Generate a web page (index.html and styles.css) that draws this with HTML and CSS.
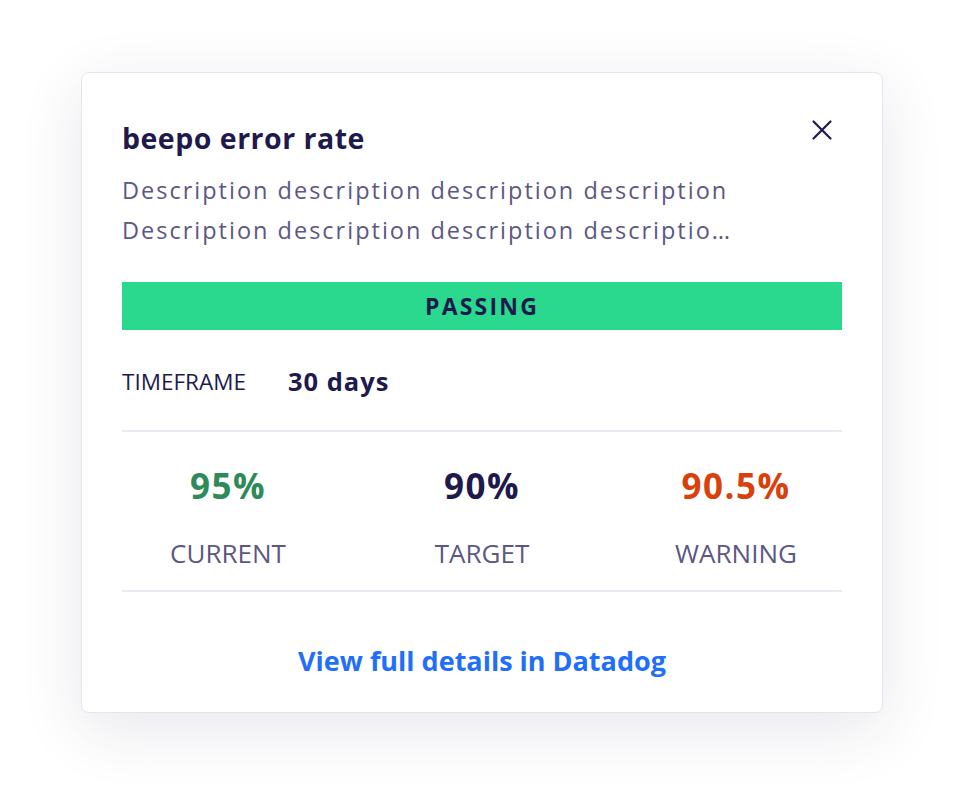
FILE: index.html
```html
<!DOCTYPE html>
<html lang="en">
<head>
<meta charset="utf-8">
<title>beepo error rate</title>
<link rel="stylesheet" href="styles.css">
</head>
<body>
  <div class="card">
    <div class="header">
      <div class="header-text">
        <h1 class="title">beepo error rate</h1>
        <p class="desc">Description description description description Description description description description description description</p>
      </div>
      <button class="close" aria-label="Close">
        <svg width="24" height="24" viewBox="0 0 24 24"><path d="M3.5 3.5 L20.5 20.5 M20.5 3.5 L3.5 20.5" stroke="#1e1a4d" stroke-width="2.2" stroke-linecap="round" fill="none"/></svg>
      </button>
    </div>
    <div class="status">PASSING</div>
    <div class="timeframe">
      <span class="tf-label">TIMEFRAME</span>
      <span class="tf-value">30 days</span>
    </div>
    <div class="stats">
      <div class="stat">
        <div class="stat-num green">95%</div>
        <div class="stat-label">CURRENT</div>
      </div>
      <div class="stat">
        <div class="stat-num navy">90%</div>
        <div class="stat-label">TARGET</div>
      </div>
      <div class="stat">
        <div class="stat-num orange">90.5%</div>
        <div class="stat-label">WARNING</div>
      </div>
    </div>
    <div class="footer">
      <a class="link" href="#">View full details in Datadog</a>
    </div>
  </div>
</body>
</html>
```
FILE: styles.css
```css
html, body {
  margin: 0;
  background: #ffffff;
}
body {
  min-height: 802px;
  box-sizing: border-box;
  padding: 72px 0 0 81px;
  font-family: "Open Sans", "Noto Sans", sans-serif;
  color: #1e1a4d;
}
.card {
  box-sizing: border-box;
  width: 802px;
  background: #fff;
  border: 1px solid #e3e5f0;
  border-radius: 8px;
  box-shadow: 0 16px 64px rgba(35, 35, 80, 0.11);
  padding: 49px 40px 35px;
}
.header {
  display: flex;
  align-items: flex-start;
}
.header-text {
  flex: 1;
}
.title {
  margin: 0;
  font-size: 28.5px;
  line-height: 32px;
  font-weight: 700;
  letter-spacing: 0.5px;
  color: #1e1a4d;
}
.desc {
  margin: 16px 0 0;
  max-width: 616px;
  font-size: 23.5px;
  line-height: 40px;
  letter-spacing: 2px;
  color: #5c5784;
  display: -webkit-box;
  -webkit-line-clamp: 2;
  -webkit-box-orient: vertical;
  overflow: hidden;
}
.close {
  margin: -4px 8px 0 0;
  padding: 0;
  width: 24px;
  height: 24px;
  border: 0;
  background: none;
  cursor: pointer;
}
.close svg { display: block; }
.status {
  margin-top: 32px;
  height: 48px;
  background: #2ad98d;
  color: #1e1a4d;
  font-size: 23px;
  font-weight: 700;
  letter-spacing: 2.2px;
  line-height: 48px;
  text-align: center;
}
.timeframe {
  margin-top: 36px;
  height: 30px;
  display: flex;
  align-items: center;
  gap: 42px;
  padding-bottom: 34px;
  border-bottom: 2px solid #e8eaf4;
}
.tf-label {
  font-size: 22.5px;
  color: #1e1a4d;
}
.tf-value {
  font-size: 25.5px;
  font-weight: 700;
  letter-spacing: 1px;
  color: #1e1a4d;
}
.stats {
  display: grid;
  grid-template-columns: repeat(3, 212px);
  justify-content: space-between;
  padding: 34px 0 22px;
  border-bottom: 2px solid #e8eaf4;
}
.stat {
  display: flex;
  flex-direction: column;
  align-items: center;
  gap: 32px;
}
.stat-num {
  font-size: 35px;
  line-height: 40px;
  font-weight: 700;
  letter-spacing: 1.5px;
}
.green { color: #2e8a58; }
.navy { color: #1e1a4d; }
.orange { color: #d8400c; }
.stat-label {
  font-size: 26px;
  line-height: 30px;
  color: #5c5784;
}
.footer {
  margin-top: 53px;
  text-align: center;
}
.link {
  font-size: 27px;
  line-height: 32px;
  font-weight: 700;
  color: #1f6ffa;
  text-decoration: none;
  display: inline-block;
}
```
